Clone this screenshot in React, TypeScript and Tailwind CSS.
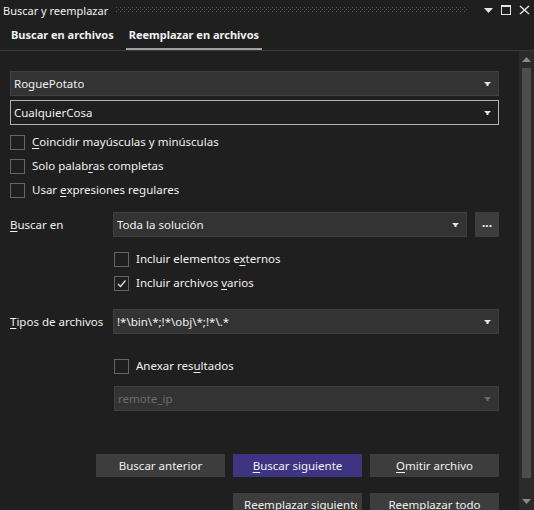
import React from "react";

const font = { fontFamily: '"Noto Sans", "Segoe UI", sans-serif' };

function Caret({ color = "#e6e6e6" }: { color?: string }) {
  return (
    <svg width="7" height="4" viewBox="0 0 7 4" className="shrink-0">
      <path d="M0 0h7L4.5 2.5v1.5h-2V2.5z" fill={color} />
    </svg>
  );
}

function U({ children }: { children: React.ReactNode }) {
  return <span className="underline underline-offset-2">{children}</span>;
}

function Combo({
  children,
  focused = false,
  disabled = false,
  className = "",
}: {
  children: React.ReactNode;
  focused?: boolean;
  disabled?: boolean;
  className?: string;
}) {
  return (
    <div
      className={`flex h-[25px] shrink-0 items-center justify-between border pl-[3px] pr-[7px] text-[11.5px] ${
        focused ? "border-[#b4b4b4] bg-[#1f1f1f]" : "border-[#3f3f3f] bg-[#333333]"
      } ${disabled ? "text-[#6b6b6b]" : "text-[#f1f1f1]"} ${className}`}
    >
      <span className="truncate">{children}</span>
      <Caret color={disabled ? "#6b6b6b" : "#e6e6e6"} />
    </div>
  );
}

function Check({ label, checked = false }: { label: React.ReactNode; checked?: boolean }) {
  return (
    <div className="flex h-[24px] shrink-0 items-center gap-[7px] text-[11.5px] text-[#f1f1f1]">
      <div className="flex h-[15px] w-[15px] items-center justify-center border border-[#666666] bg-[#1f1f1f]">
        {checked && (
          <svg width="11" height="11" viewBox="0 0 11 11">
            <path d="M2 6l2.5 2.5L9.5 2.5" stroke="#e0e0e0" strokeWidth="1.3" fill="none" />
          </svg>
        )}
      </div>
      <span>{label}</span>
    </div>
  );
}

function Btn({
  children,
  primary = false,
  className = "justify-center",
}: {
  children: React.ReactNode;
  primary?: boolean;
  className?: string;
}) {
  return (
    <div
      className={`flex h-[23px] w-[129px] shrink-0 items-center overflow-hidden whitespace-nowrap text-[11.5px] text-[#f1f1f1] ${
        primary ? "bg-[#3f3482]" : "bg-[#3d3d3d]"
      } ${className}`}
    >
      {children}
    </div>
  );
}

export default function App() {
  return (
    <div
      className="flex h-[510px] w-[534px] flex-col overflow-hidden bg-[#1f1f1f] text-[#f1f1f1]"
      style={font}
    >
      {/* Title bar */}
      <div className="flex h-[20px] shrink-0 items-center pl-[3px] pr-[4px]">
        <span className="text-[11px] leading-none text-[#f1f1f1]">Buscar y reemplazar</span>
        <svg className="ml-[8px] h-[6px] flex-1" preserveAspectRatio="none">
          <defs>
            <pattern id="grip" width="4" height="4" patternUnits="userSpaceOnUse">
              <rect x="0" y="0" width="1" height="1" fill="#555555" />
              <rect x="2" y="2" width="1" height="1" fill="#555555" />
            </pattern>
          </defs>
          <rect width="100%" height="100%" fill="url(#grip)" />
        </svg>
        <div className="ml-[16px] flex items-center gap-[8px]">
          <svg width="9" height="5" viewBox="0 0 9 5">
            <path d="M0 0h9L4.5 5z" fill="#e6e6e6" />
          </svg>
          <svg width="10" height="10" viewBox="0 0 10 10">
            <rect x="0.5" y="0.5" width="9" height="9" stroke="#e6e6e6" fill="none" />
            <rect x="0" y="0" width="10" height="2" fill="#e6e6e6" />
          </svg>
          <svg width="11" height="10" viewBox="0 0 11 10">
            <path d="M1 1l9 8M10 1L1 9" stroke="#e6e6e6" strokeWidth="1.4" />
          </svg>
        </div>
      </div>

      {/* Tabs */}
      <div className="flex h-[31px] shrink-0 items-stretch gap-[12px] border-b border-[#3a3a3a] pl-[11px] text-[11px] font-bold">
        <div className="flex items-center">Buscar en archivos</div>
        <div className="flex items-center border-b-2 border-[#a0a0a0] px-[3px] pt-[2px]">
          Reemplazar en archivos
        </div>
      </div>

      <div className="flex min-h-0 flex-1">
        {/* Content */}
        <div className="flex flex-1 flex-col pl-[10px] pr-[20px] pt-[20px]">
          <Combo>RoguePotato</Combo>
          <Combo focused className="mt-[4px]">
            CualquierCosa
          </Combo>

          <div className="mt-[5px] flex shrink-0 flex-col">
            <Check label={<><U>C</U>oincidir mayúsculas y minúsculas</>} />
            <Check label={<>Solo palab<U>r</U>as completas</>} />
            <Check label={<>Usar <U>e</U>xpresiones regulares</>} />
          </div>

          <div className="mt-[10px] flex shrink-0 items-center">
            <div className="w-[103px] text-[11.5px]">
              <U>B</U>uscar en
            </div>
            <Combo className="flex-1">Toda la solución</Combo>
            <div className="ml-[8px] flex h-[25px] w-[24px] items-center justify-center bg-[#3d3d3d] pb-[4px] text-[12px] font-bold">
              ...
            </div>
          </div>

          <div className="mt-[10px] flex shrink-0 flex-col pl-[104px]">
            <Check label={<>Incluir elementos e<U>x</U>ternos</>} />
            <Check checked label={<>Incluir archivos <U>v</U>arios</>} />
          </div>

          <div className="mt-[14px] flex shrink-0 items-center">
            <div className="w-[103px] text-[11.5px]">
              <U>T</U>ipos de archivos
            </div>
            <Combo className="flex-1">!*\bin\*;!*\obj\*;!*\.*</Combo>
          </div>

          <div className="mt-[20px] flex shrink-0 flex-col pl-[104px]">
            <Check label={<>Anexar res<U>u</U>ltados</>} />
            <Combo disabled className="mt-[8px]">
              remote_ip
            </Combo>
          </div>

          <div className="mt-[43px] flex shrink-0 justify-end gap-[8px]">
            <Btn>Buscar anterior</Btn>
            <Btn primary>
              <span>
                <U>B</U>uscar siguiente
              </span>
            </Btn>
            <Btn>
              <span>
                <U>O</U>mitir archivo
              </span>
            </Btn>
          </div>
          <div className="mt-[16px] flex shrink-0 justify-end gap-[8px]">
            <Btn className="justify-start pl-[11px]">
              <span className="block w-[113px] overflow-hidden">Reemplazar siguiente</span>
            </Btn>
            <Btn>Reemplazar todo</Btn>
          </div>
        </div>

        {/* Scrollbar */}
        <div className="flex w-[15px] shrink-0 flex-col items-center bg-[#2a2a2a] pt-[6px]">
          <svg width="9" height="5" viewBox="0 0 9 5">
            <path d="M0 5h9L4.5 0z" fill="#8a8a8a" />
          </svg>
          <div className="mt-[6px] h-[410px] w-[9px] shrink-0 bg-[#4d4d4d]" />
          <div className="flex-1" />
          <svg width="9" height="5" viewBox="0 0 9 5" className="mb-[6px]">
            <path d="M0 0h9L4.5 5z" fill="#8a8a8a" />
          </svg>
        </div>
      </div>
    </div>
  );
}
